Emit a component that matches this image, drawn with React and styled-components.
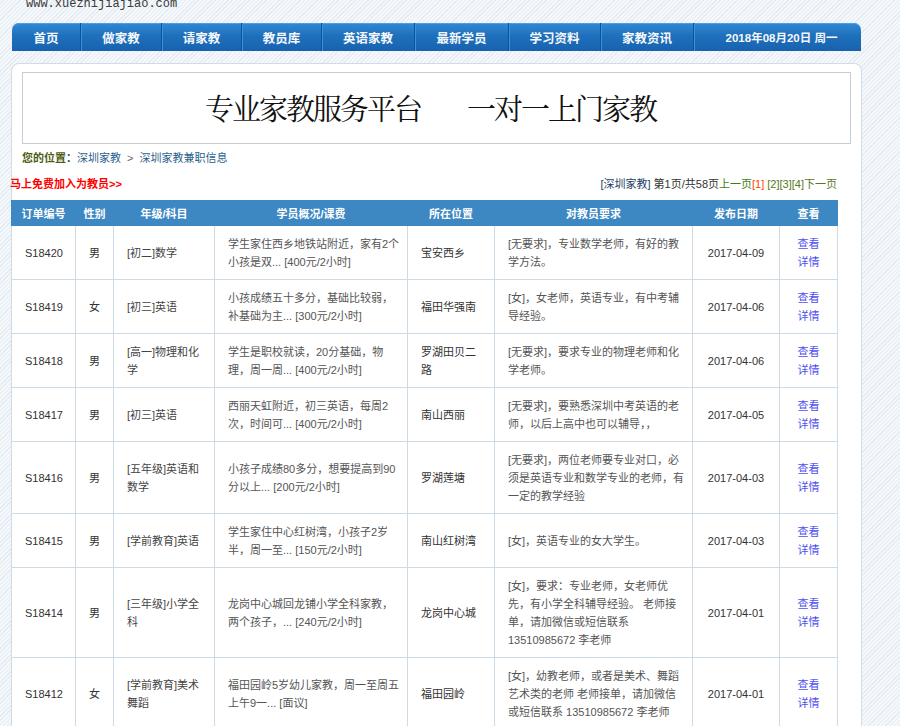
import React from 'react'
import styled, { createGlobalStyle } from 'styled-components'

const GlobalStyle = createGlobalStyle`
  html, body {
    margin: 0;
    padding: 0;
  }
  body {
    min-height: 726px;
    overflow: hidden;
    background-color: #eef3f7;
    background-image: repeating-linear-gradient(135deg, #f4f8fb 0 2px, #e4ebf2 2px 3px);
    font-family: "Liberation Sans", "Noto Sans CJK SC", sans-serif;
    font-size: 11px;
    color: #333;
  }
`

const Page = styled.div`
  width: 851px;
  padding-left: 11px;
`

const TopBar = styled.div`
  height: 23px;
  display: flex;
  align-items: flex-start;
  padding-left: 15px;
`

const Url = styled.span`
  margin-top: -2px;
  font-family: "Liberation Mono", monospace;
  font-size: 12px;
  line-height: 12px;
  color: #3a3a3a;
`

const Nav = styled.div`
  margin: 0 1px;
  height: 28px;
  display: flex;
  border-radius: 7px 7px 0 0;
  overflow: hidden;
  background: linear-gradient(#3189d6, #1f70bc 45%, #1762ae);
  box-shadow: inset 0 1px 0 #4c9ee6;
`

const NavItem = styled.div`
  flex: none;
  width: ${p => p.$w}px;
  display: flex;
  align-items: center;
  justify-content: center;
  color: #f4f8fc;
  font-size: ${p => (p.$small ? '11.5px' : '12.5px')};
  font-weight: bold;
  border-left: ${p => (p.$first ? 'none' : '1px solid #0e5398')};
  box-shadow: ${p => (p.$first ? 'none' : 'inset 1px 0 0 #3a91dc')};
`

const Panel = styled.div`
  margin-top: 12px;
  min-height: 700px;
  background: #fff;
  border: 1px solid #d3dce4;
  border-bottom: none;
  border-radius: 8px 8px 0 0;
`

const Banner = styled.div`
  margin: 8px 10px 0;
  height: 70px;
  border: 1px solid #c5ccd6;
  display: flex;
  align-items: center;
  justify-content: center;
  gap: 46px;
  padding-right: 12px;
`

const Slogan = styled.span`
  font-family: "KaiTi", "Noto Serif CJK SC", "Noto Sans CJK SC", serif;
  font-size: 29px;
  letter-spacing: -2px;
  line-height: 36px;
  color: #111;
`

const Crumbs = styled.div`
  margin-top: 5px;
  padding-left: 10px;
  line-height: 18px;
`

const Here = styled.b`
  color: #4b5e14;
`

const CrumbLink = styled.a`
  color: #2b5f8e;
  text-decoration: none;
`

const Sep = styled.span`
  margin: 0 6px;
  color: #666;
`

const Toolbar = styled.div`
  margin: 8px 24px 0 -2px;
  display: flex;
  justify-content: space-between;
  line-height: 18px;
`

const JoinLink = styled.a`
  color: #ff0000;
  font-weight: bold;
  text-decoration: none;
`

const Pager = styled.div`
  color: #333;
`

const PageText = styled.span`
  color: ${p => p.$c};
`

const Table = styled.table`
  margin-top: 7px;
  margin-left: -1px;
  width: 826px;
  border-collapse: collapse;
  table-layout: fixed;
  border: 1px solid #c9d7e3;
`

const Th = styled.th`
  height: 24px;
  padding: 0;
  background: #3d87c3;
  border: 1px solid #3d87c3;
  color: #fff;
  font-weight: bold;
  text-align: center;
  white-space: nowrap;
`

const Td = styled.td`
  padding: 8.5px 13px;
  line-height: 18px;
  border: 1px solid #cddbe6;
  vertical-align: middle;
  white-space: nowrap;
  text-align: ${p => (p.$center ? 'center' : 'left')};
  color: ${p => p.$c || '#333'};
`

const Detail = styled.a`
  color: #4f4ff0;
  text-decoration: none;
`

const navItems = [
  ['首页', 68],
  ['做家教', 80],
  ['请家教', 79],
  ['教员库', 79],
  ['英语家教', 92],
  ['最新学员', 93],
  ['学习资料', 91],
  ['家教资讯', 92],
]

const cols = [64, 38, 101, 193, 87, 198, 87, 58]
const heads = ['订单编号', '性别', '年级/科目', '学员概况/课费', '所在位置', '对教员要求', '发布日期', '查看']

const rows = [
  {
    id: 'S18420', sex: '男', grade: ['[初二]数学'],
    info: ['学生家住西乡地铁站附近，家有2个', '小孩是双... [400元/2小时]'],
    place: ['宝安西乡'],
    req: ['[无要求]，专业数学老师，有好的教', '学方法。'],
    date: '2017-04-09',
  },
  {
    id: 'S18419', sex: '女', grade: ['[初三]英语'],
    info: ['小孩成绩五十多分，基础比较弱，', '补基础为主... [300元/2小时]'],
    place: ['福田华强南'],
    req: ['[女]，女老师，英语专业，有中考辅', '导经验。'],
    date: '2017-04-06',
  },
  {
    id: 'S18418', sex: '男', grade: ['[高一]物理和化', '学'],
    info: ['学生是职校就读，20分基础，物', '理，周一周... [400元/2小时]'],
    place: ['罗湖田贝二', '路'],
    req: ['[无要求]，要求专业的物理老师和化', '学老师。'],
    date: '2017-04-06',
  },
  {
    id: 'S18417', sex: '男', grade: ['[初三]英语'],
    info: ['西丽天虹附近，初三英语，每周2', '次，时间可... [400元/2小时]'],
    place: ['南山西丽'],
    req: ['[无要求]，要熟悉深圳中考英语的老', '师，以后上高中也可以辅导，，'],
    date: '2017-04-05',
  },
  {
    id: 'S18416', sex: '男', grade: ['[五年级]英语和', '数学'],
    info: ['小孩子成绩80多分，想要提高到90', '分以上... [200元/2小时]'],
    place: ['罗湖莲塘'],
    req: ['[无要求]，两位老师要专业对口，必', '须是英语专业和数学专业的老师，有', '一定的教学经验'],
    date: '2017-04-03',
  },
  {
    id: 'S18415', sex: '男', grade: ['[学前教育]英语'],
    info: ['学生家住中心红树湾，小孩子2岁', '半，周一至... [150元/2小时]'],
    place: ['南山红树湾'],
    req: ['[女]，英语专业的女大学生。'],
    date: '2017-04-03',
  },
  {
    id: 'S18414', sex: '男', grade: ['[三年级]小学全', '科'],
    info: ['龙岗中心城回龙铺小学全科家教，', '两个孩子，... [240元/2小时]'],
    place: ['龙岗中心城'],
    req: ['[女]，要求：专业老师，女老师优', '先，有小学全科辅导经验。 老师接', '单，请加微信或短信联系', '13510985672 李老师'],
    date: '2017-04-01',
  },
  {
    id: 'S18412', sex: '女', grade: ['[学前教育]美术', '舞蹈'],
    info: ['福田园岭5岁幼儿家教，周一至周五', '上午9一... [面议]'],
    place: ['福田园岭'],
    req: ['[女]，幼教老师，或者是美术、舞蹈', '艺术类的老师 老师接单，请加微信', '或短信联系 13510985672 李老师'],
    date: '2017-04-01',
  },
]

const Lines = ({ lines }) =>
  lines.map((line, i) => (
    <React.Fragment key={i}>
      {i > 0 && <br />}
      {line}
    </React.Fragment>
  ))

const App = () => {
  return (
    <Page>
      <GlobalStyle />
      <TopBar>
        <Url>www.xuezhijiajiao.com</Url>
      </TopBar>
      <Nav>
        {navItems.map(([label, w], i) => (
          <NavItem key={label} $w={w} $first={i === 0}>
            {label}
          </NavItem>
        ))}
        <NavItem $w={175} $small>2018年08月20日 周一</NavItem>
      </Nav>

      <Panel>
        <Banner>
          <Slogan>专业家教服务平台</Slogan>
          <Slogan>一对一上门家教</Slogan>
        </Banner>

        <Crumbs>
          <Here>您的位置：</Here>
          <CrumbLink href="#">深圳家教</CrumbLink>
          <Sep>&gt;</Sep>
          <CrumbLink href="#">深圳家教兼职信息</CrumbLink>
        </Crumbs>

        <Toolbar>
          <JoinLink href="#">马上免费加入为教员&gt;&gt;</JoinLink>
          <Pager>
            <PageText $c="#1e3f66">[深圳家教]</PageText> 第1页/共58页
            <PageText $c="#3f7f12">上一页</PageText>
            <PageText $c="#ff3c00">[1]</PageText>{' '}
            <PageText $c="#557a22">[2][3][4]下一页</PageText>
          </Pager>
        </Toolbar>

        <Table>
          <colgroup>
            {cols.map((w, i) => (
              <col key={i} style={{ width: w }} />
            ))}
          </colgroup>
          <thead>
            <tr>
              {heads.map(h => (
                <Th key={h}>{h}</Th>
              ))}
            </tr>
          </thead>
          <tbody>
            {rows.map(r => (
              <tr key={r.id}>
                <Td $center>{r.id}</Td>
                <Td $center>{r.sex}</Td>
                <Td $c="#444"><Lines lines={r.grade} /></Td>
                <Td $c="#555"><Lines lines={r.info} /></Td>
                <Td><Lines lines={r.place} /></Td>
                <Td $c="#555"><Lines lines={r.req} /></Td>
                <Td $center>{r.date}</Td>
                <Td $center>
                  <Detail href="#">查看<br />详情</Detail>
                </Td>
              </tr>
            ))}
          </tbody>
        </Table>
      </Panel>
    </Page>
  )
}

export default App
